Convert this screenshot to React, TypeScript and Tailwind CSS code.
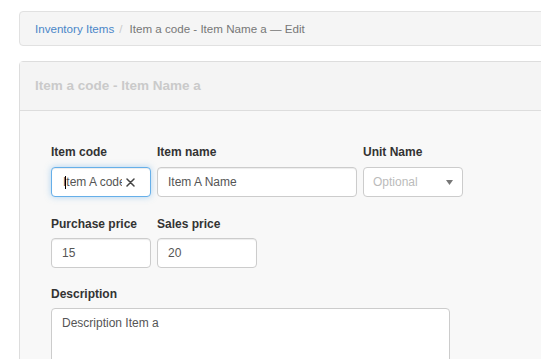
import React from "react";

const font = { fontFamily: '"Liberation Sans", Arial, sans-serif' };

function Label({ children }: { children: React.ReactNode }) {
  return <div className="h-[16px] leading-[16px] text-[12px] font-bold text-[#333] mb-[7px] whitespace-nowrap">{children}</div>;
}

function TextBox({ value, w }: { value: string; w: string }) {
  return (
    <div className={`${w} h-[30px] rounded-[4px] border border-[#ccc] bg-white shadow-[inset_0_1px_1px_rgba(0,0,0,0.075)] px-[10px] flex items-center text-[12px] text-[#555]`}>
      {value}
    </div>
  );
}

export default function App() {
  return (
    <div className="w-[541px] h-[359px] overflow-hidden bg-white pt-[11px] pl-[19px]" style={font}>
      {/* breadcrumb */}
      <div className="w-[560px] h-[35px] rounded-[4px] border border-[#e1e1e1] bg-[#f5f5f5] px-[15px] flex items-center text-[11.6px]">
        <span className="text-[#4a86c8]">Inventory Items</span>
        <span className="text-[#ccc] px-[5px]">/</span>
        <span className="text-[#777] pl-[2px]">Item a code - Item Name a — Edit</span>
      </div>

      {/* panel */}
      <div className="mt-[15px] w-[560px] h-[300px] rounded-t-[4px] border border-[#ddd] bg-[#f8f8f8]">
        <div className="h-[49px] border-b border-[#ddd] bg-[#f4f4f4] px-[15px] flex items-center text-[13.5px] font-bold text-[#cacaca]">
          Item a code - Item Name a
        </div>

        <div className="pt-[33px] pl-[31px]">
          {/* row 1 */}
          <div className="flex gap-[6px] mb-[19px]">
            <div>
              <Label>Item code</Label>
              <div className="relative w-[100px] h-[30px] rounded-[4px] border border-[#66afe9] bg-white shadow-[inset_0_1px_1px_rgba(0,0,0,0.075),0_0_6px_rgba(102,175,233,0.5)] pl-[11px] pr-[28px] flex items-center text-[12px] text-[#555]">
                <span className="overflow-hidden whitespace-nowrap">Item A code</span>
                <span className="absolute left-[13px] top-[8px] w-[1px] h-[13px] bg-black" />
                <svg className="absolute right-[15px] top-[10px]" width="9" height="9" viewBox="0 0 9 9">
                  <path d="M1 1L8 8M8 1L1 8" stroke="#444" strokeWidth="1.5" strokeLinecap="round" />
                </svg>
              </div>
            </div>
            <div>
              <Label>Item name</Label>
              <TextBox value="Item A Name" w="w-[200px]" />
            </div>
            <div>
              <Label>Unit Name</Label>
              <div className="w-[100px] h-[30px] rounded-[4px] border border-[#ccc] bg-white pl-[9px] pr-[9px] flex items-center justify-between text-[12px] text-[#bbb]">
                <span>Optional</span>
                <svg width="7" height="5" viewBox="0 0 7 5">
                  <path d="M0 0H7L3.5 5Z" fill="#777" />
                </svg>
              </div>
            </div>
          </div>

          {/* row 2 */}
          <div className="flex gap-[6px] mb-[18px]">
            <div>
              <div className="h-[16px] leading-[16px] text-[12px] font-bold text-[#333] mb-[6px]">Purchase price</div>
              <TextBox value="15" w="w-[100px]" />
            </div>
            <div>
              <div className="h-[16px] leading-[16px] text-[12px] font-bold text-[#333] mb-[6px]">Sales price</div>
              <TextBox value="20" w="w-[100px]" />
            </div>
          </div>

          {/* description */}
          <div className="h-[16px] leading-[16px] text-[12px] font-bold text-[#333] mb-[6px]">Description</div>
          <div className="w-[399px] h-[80px] rounded-[4px] border border-[#ccc] bg-white px-[10px] pt-[6px] text-[12px] leading-[16px] text-[#555]">
            Description Item a
          </div>
        </div>
      </div>
    </div>
  );
}
